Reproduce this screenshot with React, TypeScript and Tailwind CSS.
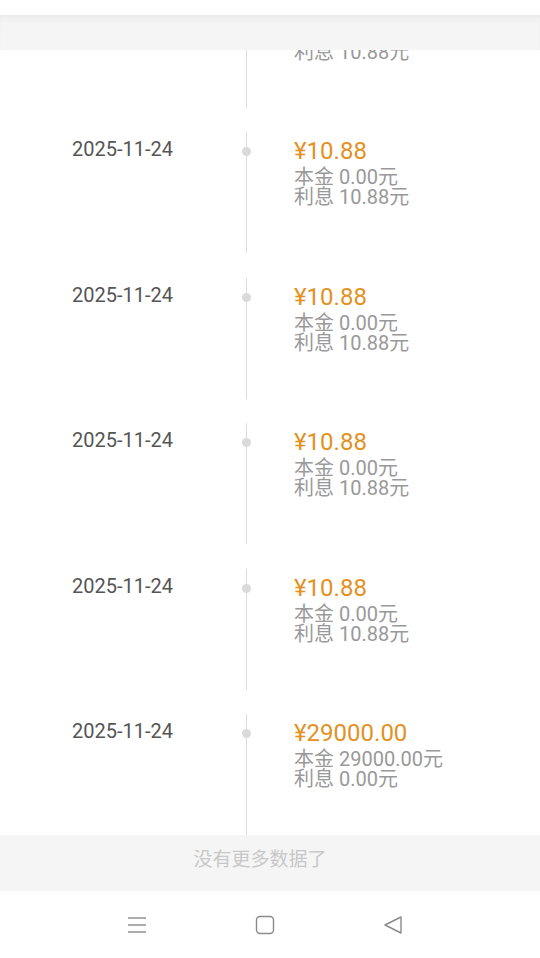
import React from "react";

type Record = {
  date: string;
  amount: string;
  principal: string;
  interest: string;
};

const records: Record[] = [
  { date: "2025-11-24", amount: "¥10.88", principal: "0.00元", interest: "10.88元" },
  { date: "2025-11-24", amount: "¥10.88", principal: "0.00元", interest: "10.88元" },
  { date: "2025-11-24", amount: "¥10.88", principal: "0.00元", interest: "10.88元" },
  { date: "2025-11-24", amount: "¥10.88", principal: "0.00元", interest: "10.88元" },
  { date: "2025-11-24", amount: "¥10.88", principal: "0.00元", interest: "10.88元" },
  { date: "2025-11-24", amount: "¥29000.00", principal: "29000.00元", interest: "0.00元" },
];

const font = { fontFamily: 'Roboto, "Noto Sans CJK SC", sans-serif' };

const RecordRow = ({ item }: { item: Record }) => (
  <div className="pt-[24.5px]">
    <div className="flex h-[121px]">
      <div className="w-[246px] pl-[72px] pt-[5px] text-[20px] leading-[24px] text-[#555]">
        {item.date}
      </div>
      <div className="relative w-px bg-[#dcdcdc]">
        <div className="absolute left-[-4px] top-[15px] h-[9px] w-[9px] rounded-full bg-[#dadada]" />
      </div>
      <div className="pl-[47px] pt-[5px]">
        <div className="text-[24px] leading-[28px] text-[#e3911f]">{item.amount}</div>
        <div className="mt-[2px] text-[20px] leading-[20px] text-[#999]">本金 {item.principal}</div>
        <div className="text-[20px] leading-[20px] text-[#999]">利息 {item.interest}</div>
      </div>
    </div>
  </div>
);

const App = () => {
  return (
    <div className="flex h-[958px] w-[540px] flex-col bg-white" style={font}>
      <div className="h-[15px] bg-white" />
      <div className="relative z-10 h-[35px] bg-[#f5f5f5] shadow-[inset_0_6px_8px_-4px_rgba(0,0,0,0.06)]" />

      <div className="flex-1 overflow-hidden">
        <div className="-mt-[88px]">
          {records.map((item, i) => (
            <RecordRow key={i} item={item} />
          ))}
        </div>
      </div>

      <div className="flex h-[56px] items-center justify-center bg-[#f5f5f5] pb-[6px] pr-[20px] text-[19px] text-[#c8c8c8]">
        没有更多数据了
      </div>

      <div className="flex h-[67px] items-center justify-center gap-[108px] bg-white pr-[10px]">
        <svg width="20" height="20" viewBox="0 0 20 20" fill="none" stroke="#8a8a8a" strokeWidth="1.4">
          <line x1="1" y1="3" x2="19" y2="3" />
          <line x1="1" y1="10" x2="19" y2="10" />
          <line x1="1" y1="17" x2="19" y2="17" />
        </svg>
        <svg width="20" height="20" viewBox="0 0 20 20" fill="none" stroke="#8a8a8a" strokeWidth="1.4">
          <rect x="1.5" y="1.5" width="17" height="17" rx="3.5" />
        </svg>
        <svg width="20" height="20" viewBox="0 0 20 20" fill="none" stroke="#8a8a8a" strokeWidth="1.4" strokeLinejoin="round">
          <path d="M2 10 L18 2 L18 18 Z" />
        </svg>
      </div>
    </div>
  );
};

export default App;
